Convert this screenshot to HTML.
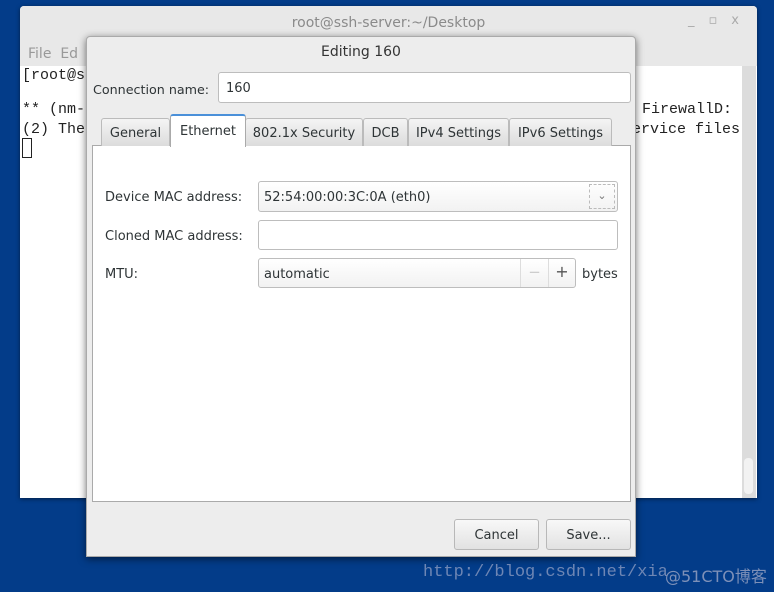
<!DOCTYPE html>
<html><head><style>
*{box-sizing:border-box;margin:0;padding:0}
body{width:774px;height:592px;background:#033c89;position:relative;overflow:hidden;font-family:"DejaVu Sans","Liberation Sans",sans-serif;font-size:13px;color:#2e3436}
.abs{position:absolute}
.term{left:20px;top:6px;width:737px;height:492px;background:#fff;border-radius:4px 4px 0 0;box-shadow:0 1px 4px rgba(0,0,0,.5)}
.ttl{left:0;top:0;width:737px;height:60px;background:#e8e8e8;border-radius:4px 4px 0 0}
.mono{font-family:"Liberation Mono","DejaVu Sans Mono",monospace;font-size:15px;color:#222;white-space:pre}
.dlg{left:86px;top:36px;width:550px;height:521px;background:#ededed;border:1px solid #aaa;border-radius:4px 4px 0 0;box-shadow:0 2px 8px rgba(0,0,0,.55)}
.entry{background:#fff;border:1px solid #bdbdbd;border-radius:3px}
.combo{background:linear-gradient(#fff,#f2f2f2);border:1px solid #bdbdbd;border-radius:3px}
.tab{top:81px;height:28px;border:1px solid #bbb;border-bottom:none;border-radius:3px 3px 0 0;background:linear-gradient(#f4f4f4,#dcdcdc);text-align:center;line-height:30px}
.btn{top:482px;height:31px;border:1px solid #b8b8b8;border-radius:3px;background:linear-gradient(#f8f8f8,#e2e2e2);text-align:center;line-height:32px}
</style></head><body>
<div class="abs term">
 <div class="abs ttl"></div>
 <div class="abs" style="left:0;width:737px;top:9px;text-align:center;color:#8a8a8a;font-size:14px">root@ssh-server:~/Desktop</div>
 <div class="abs" style="left:668px;top:7px;color:#aaa;font-size:13px;letter-spacing:14px">_▫x</div>
 <div class="abs" style="left:8px;top:40px;color:#999;font-size:14px">File&nbsp;&nbsp;Ed</div>
 <div class="abs" style="left:722px;top:60px;width:14px;height:432px;background:#dcdcdc"></div>
 <div class="abs" style="left:724px;top:452px;width:9px;height:36px;background:#f2f2f2;border-radius:4px"></div>
 <div class="abs mono" style="left:2px;top:61px">[root@s</div>
 <div class="abs mono" style="left:2px;top:95px">** (nm-</div>
 <div class="abs mono" style="left:2px;top:115px">(2) The</div>
 <div class="abs" style="left:2px;top:132px;width:10px;height:20px;border:1px solid #222"></div>
 <div class="abs mono" style="left:622px;top:95px">FirewallD:</div>
 <div class="abs mono" style="left:612px;top:115px">ervice files</div>
</div>
<div class="abs dlg">
 <div class="abs" style="left:0;width:548px;top:7px;text-align:center;font-size:14px;color:#333">Editing 160</div>
 <div class="abs" style="left:6px;top:45px;font-size:12.7px">Connection name:</div>
 <div class="abs entry" style="left:131px;top:35px;width:413px;height:31px;padding:8px 7px">160</div>
 <div class="abs" style="left:5px;top:108px;width:539px;height:357px;background:#fff;border:1px solid #aaa"></div>
 <div class="abs tab" style="left:14px;width:69px">General</div>
 <div class="abs tab" style="left:83px;top:77px;height:33px;width:76px;background:#fff;border-color:#aaa;border-top:2px solid #4a90d9;line-height:32px;z-index:2">Ethernet</div>
 <div class="abs tab" style="left:158px;width:118px">802.1x Security</div>
 <div class="abs tab" style="left:276px;width:45px">DCB</div>
 <div class="abs tab" style="left:321px;width:101px">IPv4 Settings</div>
 <div class="abs tab" style="left:422px;width:103px">IPv6 Settings</div>
 <div class="abs" style="left:18px;top:153px">Device MAC address:</div>
 <div class="abs combo" style="left:171px;top:144px;width:360px;height:31px;padding:8px 5px">52:54:00:00:3C:0A (eth0)</div>
 <div class="abs" style="left:502px;top:147px;width:26px;height:25px;border:1px dashed #bbb;text-align:center;line-height:22px;color:#777;font-size:11px">⌄</div>
 <div class="abs" style="left:18px;top:192px">Cloned MAC address:</div>
 <div class="abs entry" style="left:171px;top:183px;width:360px;height:30px"></div>
 <div class="abs" style="left:18px;top:230px">MTU:</div>
 <div class="abs entry" style="left:171px;top:221px;width:318px;height:30px;padding:8px 5px;background:linear-gradient(#fff,#f2f2f2)">automatic</div>
 <div class="abs" style="left:433px;top:222px;width:28px;height:28px;border-left:1px solid #ddd;text-align:center;line-height:26px;color:#ccc;font-size:15px">−</div>
 <div class="abs" style="left:461px;top:222px;width:27px;height:28px;border-left:1px solid #ddd;text-align:center;line-height:26px;color:#555;font-size:16px">+</div>
 <div class="abs" style="left:495px;top:230px">bytes</div>
 <div class="abs btn" style="left:367px;width:85px">Cancel</div>
 <div class="abs btn" style="left:459px;width:85px">Save...</div>
</div>
<div class="abs" style="left:423px;top:563px;font-family:'Liberation Mono',monospace;font-size:17px;color:#6e86b4;white-space:pre">http://blog.csdn.net/xia</div>
<div class="abs" style="left:665px;top:563px;font-family:'DejaVu Sans','Noto Sans CJK SC',sans-serif;font-size:16px;color:#7d90b8;white-space:pre">@51CTO博客</div>
</body></html>
